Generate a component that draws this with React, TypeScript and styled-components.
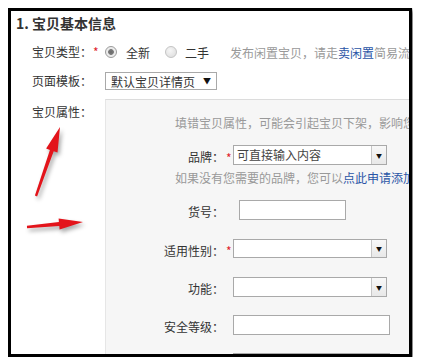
import React from "react";
import styled, { createGlobalStyle } from "styled-components";

const Global = createGlobalStyle`
  html, body { margin: 0; padding: 0; background: #fff; }
  body { margin: 8px; font-family: "Noto Sans CJK SC", "Noto Sans", sans-serif; color: #333; }
  * { box-sizing: border-box; }
`;

const Frame = styled.div`
  position: relative;
  width: 404px;
  height: 349px;
  border: 3px solid #000;
  box-shadow: 3px 2px 4px rgba(0, 0, 0, 0.5);
  overflow: hidden;
  background: #fff;
`;

const Title = styled.div`
  height: 24px;
  line-height: 24px;
  padding-left: 5px;
  font-size: 14px;
  font-weight: bold;
  color: #333;
  white-space: nowrap;
`;

const Form = styled.div`
  padding-left: 21px;
`;

const Row = styled.div<{ $h?: number; $mt?: number }>`
  display: flex;
  align-items: ${(p) => (p.$h ? "center" : "flex-start")};
  height: ${(p) => (p.$h ? `${p.$h}px` : "auto")};
  margin-top: ${(p) => p.$mt ?? 0}px;
  white-space: nowrap;
`;

const LabelCell = styled.div<{ $pt?: number }>`
  flex: 0 0 73px;
  font-size: 12px;
  line-height: 20px;
  padding-top: ${(p) => p.$pt ?? 0}px;
  color: #333;
  display: flex;
`;

const Star = styled.span`
  color: #e0232b;
  margin-left: 1px;
  font-size: 12px;
`;

const Radio = styled.span<{ $checked?: boolean; $ml?: number }>`
  flex: 0 0 12px;
  width: 12px;
  height: 12px;
  margin-left: ${(p) => p.$ml ?? 0}px;
  border-radius: 50%;
  border: 1px solid ${(p) => (p.$checked ? "#9a9a9a" : "#c4c4c4")};
  background: ${(p) =>
    p.$checked
      ? "radial-gradient(circle, #6a6a6a 0, #7a7a7a 2.5px, #e9e9e9 3.2px, #f4f4f4 100%)"
      : "radial-gradient(circle at 40% 35%, #f6f6f6 0, #dadada 100%)"};
`;

const RadioText = styled.span<{ $ml: number }>`
  margin-left: ${(p) => p.$ml}px;
  font-size: 12px;
  color: #333;
`;

const Hint = styled.span<{ $ml?: number }>`
  margin-left: ${(p) => p.$ml ?? 0}px;
  font-size: 12px;
  color: #999;
`;

const Link = styled.span`
  color: #2a55a6;
`;

const Select = styled.div`
  width: 112px;
  height: 18px;
  border: 1px solid #a9a9a9;
  display: flex;
  align-items: center;
  justify-content: space-between;
  padding: 0 5px 0 5px;
  font-size: 12px;
  color: #333;
  background: #fff;
`;

const Caret = styled.span`
  font-size: 8px;
  line-height: 8px;
  color: #111;
`;

const Panel = styled.div`
  flex: 0 0 330px;
  height: 270px;
  background: #f6f6f6;
  border-top: 1px solid #dcdcdc;
  border-left: 1px solid #e6e6e6;
  white-space: nowrap;
`;

const Notice = styled.div<{ $mt: number }>`
  margin-left: 69px;
  margin-top: ${(p) => p.$mt}px;
  font-size: 12px;
  line-height: 20px;
  color: #999;
`;

const Field = styled.div<{ $mt: number; $h: number }>`
  display: flex;
  align-items: center;
  height: ${(p) => p.$h}px;
  margin-top: ${(p) => p.$mt}px;
`;

const FieldLabel = styled.div`
  flex: 0 0 118px;
  text-align: right;
  font-size: 12px;
  line-height: 16px;
  padding-top: 4px;
  color: #333;
`;

const StarCell = styled.div`
  flex: 0 0 9px;
  padding-left: 2px;
  padding-top: 4px;
  font-size: 12px;
  color: #e0232b;
`;

const Combo = styled.div<{ $w: number; $h: number; $ml?: number }>`
  flex: 0 0 ${(p) => p.$w}px;
  height: ${(p) => p.$h}px;
  margin-left: ${(p) => p.$ml ?? 0}px;
  border: 1px solid #a9a9a9;
  background: #fff;
  display: flex;
  align-items: stretch;
`;

const ComboText = styled.div`
  flex: 1;
  font-size: 12px;
  line-height: 18px;
  padding-left: 3px;
  color: #444;
`;

const DropBtn = styled.div`
  flex: 0 0 15px;
  border-left: 1px solid #c6c6c6;
  background: linear-gradient(#f8f8f8, #e8e8e8);
  display: flex;
  align-items: center;
  justify-content: center;
  font-size: 6px;
  color: #111;
`;

const Overlay = styled.svg`
  position: absolute;
  left: 0;
  top: 0;
  pointer-events: none;
  filter: drop-shadow(2px 3px 2px rgba(0, 0, 0, 0.35));
`;

export default function App() {
  return (
    <>
      <Global />
      <Frame>
        <Title>1. 宝贝基本信息</Title>
        <Form>
          <Row $h={34}>
            <LabelCell>
              宝贝类型：<Star>*</Star>
            </LabelCell>
            <Radio $checked />
            <RadioText $ml={9}>全新</RadioText>
            <Radio $ml={15} />
            <RadioText $ml={8}>二手</RadioText>
            <Hint $ml={21}>
              发布闲置宝贝，请走<Link>卖闲置</Link>简易流
            </Hint>
          </Row>
          <Row $h={24}>
            <LabelCell>页面模板：</LabelCell>
            <Select>
              <span>默认宝贝详情页</span>
              <Caret>▼</Caret>
            </Select>
          </Row>
          <Row $mt={6}>
            <LabelCell $pt={3}>宝贝属性：</LabelCell>
            <Panel>
              <Notice $mt={13}>填错宝贝属性，可能会引起宝贝下架，影响您</Notice>
              <Field $mt={12} $h={20}>
                <FieldLabel>品牌：</FieldLabel>
                <StarCell>*</StarCell>
                <Combo $w={154} $h={20}>
                  <ComboText>可直接输入内容</ComboText>
                  <DropBtn>▼</DropBtn>
                </Combo>
              </Field>
              <Notice $mt={3}>
                如果没有您需要的品牌，您可以<Link>点此申请添加</Link>
              </Notice>
              <Field $mt={12} $h={20}>
                <FieldLabel>货号：</FieldLabel>
                <StarCell />
                <Combo $w={107} $h={20} $ml={6} />
              </Field>
              <Field $mt={19} $h={19}>
                <FieldLabel>适用性别：</FieldLabel>
                <StarCell>*</StarCell>
                <Combo $w={154} $h={19}>
                  <ComboText />
                  <DropBtn>▼</DropBtn>
                </Combo>
              </Field>
              <Field $mt={19} $h={20}>
                <FieldLabel>功能：</FieldLabel>
                <StarCell />
                <Combo $w={154} $h={20}>
                  <ComboText />
                  <DropBtn>▼</DropBtn>
                </Combo>
              </Field>
              <Field $mt={18} $h={20}>
                <FieldLabel>安全等级：</FieldLabel>
                <StarCell />
                <Combo $w={157} $h={20} />
              </Field>
              <Field $mt={18} $h={20}>
                <FieldLabel />
                <StarCell />
                <Combo $w={157} $h={20} />
              </Field>
            </Panel>
          </Row>
        </Form>
        <Overlay width="100" height="235" viewBox="0 0 100 235">
          <polygon
            fill="#e3141b"
            points="26.1,185.4 42.7,140.3 46.5,141.6 49,116 35.1,137.6 38.9,138.9 23.9,184.6"
          />
          <polygon
            fill="#e3141b"
            points="16.1,217.3 48.3,215.1 48.6,218.6 72,211 47.6,207.6 47.9,211.1 15.9,214.7"
          />
        </Overlay>
      </Frame>
    </>
  );
}
